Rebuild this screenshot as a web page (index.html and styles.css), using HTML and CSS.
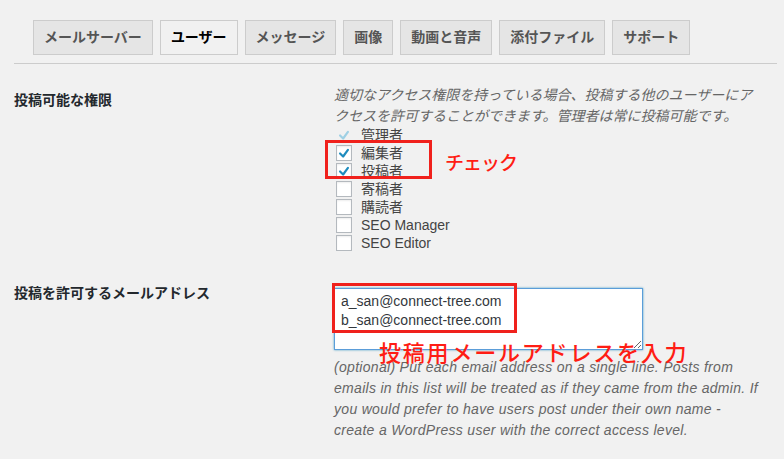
FILE: index.html
```html
<!DOCTYPE html>
<html lang="ja">
<head>
    <meta charset="UTF-8">
    <title>投稿設定 - ユーザー</title>
    <link rel="stylesheet" href="styles.css">
</head>
<body>
<div class="wrap">
    <div class="nav-tab-wrapper">
        <a class="nav-tab" href="#">メールサーバー</a>
        <a class="nav-tab nav-tab-active" href="#">ユーザー</a>
        <a class="nav-tab" href="#">メッセージ</a>
        <a class="nav-tab" href="#">画像</a>
        <a class="nav-tab" href="#">動画と音声</a>
        <a class="nav-tab" href="#">添付ファイル</a>
        <a class="nav-tab" href="#">サポート</a>
    </div>

    <div class="form-row first">
        <div class="th">投稿可能な権限</div>
        <div class="td">
            <p class="description">適切なアクセス権限を持っている場合、投稿する他のユーザーにア<br>クセスを許可することができます。管理者は常に投稿可能です。</p>
            <ul class="roles">
                <li class="disabled"><span class="box"><svg viewBox="0 0 16 16"><path d="M3.5 8.5 7 12l5.5-7.5"/></svg></span>管理者</li>
                <li><span class="box"><svg viewBox="0 0 16 16"><path d="M3.5 8.5 7 12l5.5-7.5"/></svg></span>編集者</li>
                <li><span class="box"><svg viewBox="0 0 16 16"><path d="M3.5 8.5 7 12l5.5-7.5"/></svg></span>投稿者</li>
                <li><span class="box"></span>寄稿者</li>
                <li><span class="box"></span>購読者</li>
                <li><span class="box"></span>SEO Manager</li>
                <li><span class="box"></span>SEO Editor</li>
            </ul>
            <div class="mark mark-check"></div>
            <div class="note note-check">チェック</div>
        </div>
    </div>

    <div class="form-row second">
        <div class="th">投稿を許可するメールアドレス</div>
        <div class="td">
            <textarea class="emails">a_san@connect-tree.com
b_san@connect-tree.com</textarea>
            <div class="mark mark-mail"></div>
            <div class="note note-mail">投稿用メールアドレスを入力</div>
            <p class="description en">(optional) Put each email address on a single line. Posts from emails in this list will be treated as if they came from the admin. If you would prefer to have users post under their own name - create a WordPress user with the correct access level.</p>
        </div>
    </div>
</div>
</body>
</html>
```

FILE: styles.css
```css
*{ margin:0; padding:0; box-sizing:border-box; }
body{ font:14px/1.5 "Liberation Sans", "Noto Sans CJK JP", sans-serif; background:#f1f1f1; color:#23282d; }
ul, li{ list-style:none; }
a{ text-decoration:none; }

.wrap{ margin:0 7px 0 14px; }

/* tabs */
.nav-tab-wrapper{ display:flex; gap:7px; padding:20px 0 8px 19px; border-bottom:1px solid #ccc; }
.nav-tab{ display:block; padding:5px 10px; line-height:23px; font-size:14px; font-weight:bold; color:#555; background:#e5e5e5; border:1px solid #ccc; white-space:nowrap; }
.nav-tab-active{ background:#f1f1f1; color:#000; }

/* rows */
.form-row{ display:grid; grid-template-columns:320px 429px; }
.form-row.first{ padding-top:21px; }
.form-row.second{ padding-top:36px; }
.th{ font-weight:bold; font-size:14px; line-height:21px; color:#23282d; }
.first .th{ padding-top:5px; }
.second .th{ margin-top:-5px; }
.td{ position:relative; }

.description{ font-style:italic; color:#666; line-height:21px; font-size:14px; white-space:nowrap; }
.description.en{ white-space:normal; letter-spacing:.3px; }
.first .description{ margin-bottom:-1px; }
.second .description{ margin-top:7px; }

/* checkboxes */
.roles li{ display:flex; align-items:center; height:18px; padding-left:2px; color:#444; font-size:14px; }
.box{ width:16px; height:16px; margin-right:9px; background:#fff; border:1px solid #b4b9be; box-shadow:inset 0 1px 2px rgba(0,0,0,.07); display:flex; align-items:center; justify-content:center; }
.box svg{ width:16px; height:16px; fill:none; stroke:#1e8cbe; stroke-width:2.5; stroke-linecap:round; stroke-linejoin:round; }
.roles li.disabled .box{ background:transparent; border-color:transparent; box-shadow:none; }
.roles li.disabled .box svg{ stroke:#9fd0e4; }

/* textarea */
.emails{ display:block; width:309px; height:62px; padding:3px 6px; font:14px/19px "Liberation Sans", sans-serif; color:#32373c; background:#fff; border:1px solid #5b9dd9; box-shadow:0 0 2px rgba(30,140,190,.8); resize:both; outline:none; }

/* red annotations */
.mark{ position:absolute; border:3px solid #f0211c; }
.mark-check{ left:-9px; top:55px; width:107px; height:39px; }
.mark-mail{ left:-2px; top:-5px; width:185px; height:50px; }
.note{ position:absolute; color:#ff1d14; font-family:"Noto Sans CJK JP", sans-serif; font-weight:500; white-space:nowrap; }
.note-check{ left:111px; top:64px; font-size:19px; line-height:26px; letter-spacing:-1px; }
.note-mail{ left:45px; top:50px; font-size:22px; line-height:26px; letter-spacing:1.8px; }
```
